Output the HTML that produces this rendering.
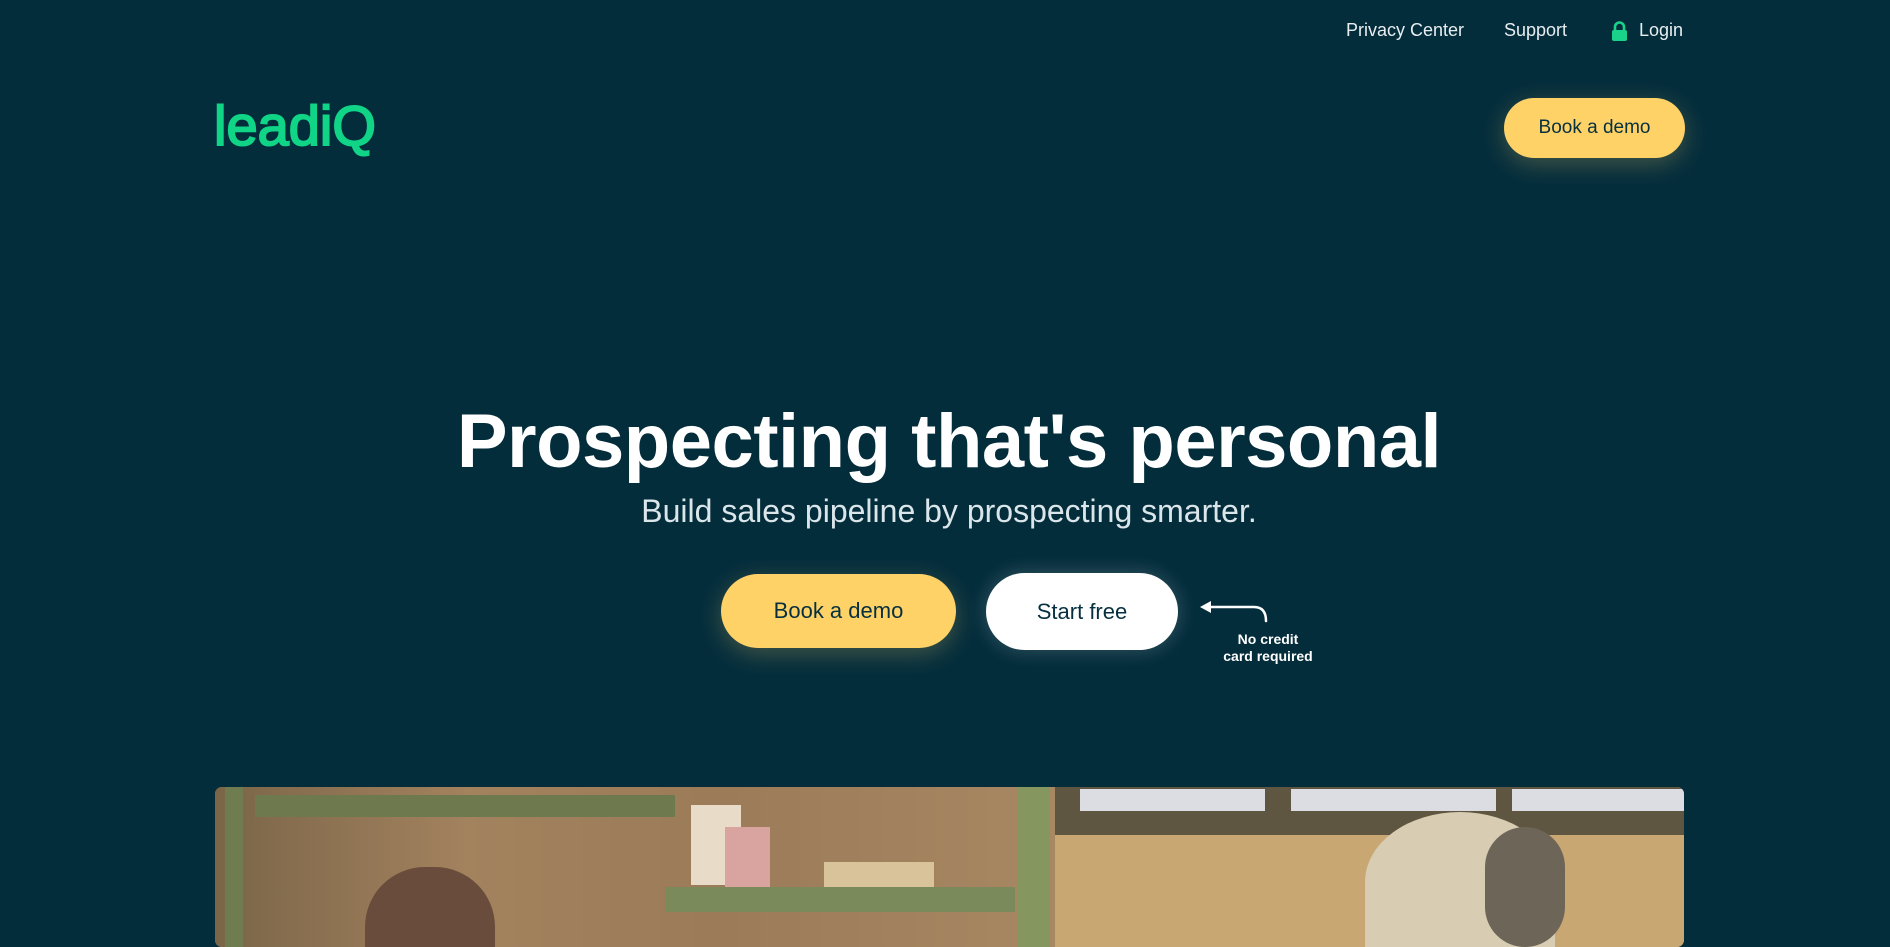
<!DOCTYPE html>
<html><head><meta charset="utf-8"><style>
*{margin:0;padding:0;box-sizing:border-box}
body{width:1890px;height:926px;overflow:hidden;background:#042d3c;font-family:"Liberation Sans",sans-serif;position:relative;color:#fff}
.a{position:absolute}
.nav{top:20px;font-size:18px;color:#e8eef0;white-space:nowrap}
.btn{position:absolute;border-radius:40px;display:flex;align-items:center;justify-content:center;color:#063040}
.y{background:#fed266;box-shadow:0 6px 24px rgba(254,210,102,.25)}
</style></head><body>
<div class="a nav" style="left:1346px">Privacy Center</div>
<div class="a nav" style="left:1504px">Support</div>
<svg class="a" style="left:1611px;top:21px" width="17" height="21" viewBox="0 0 17 21"><path d="M4 9V6a4.5 4.5 0 0 1 9 0v3" fill="none" stroke="#19d38a" stroke-width="2.6"/><rect x="1" y="9" width="15" height="11" rx="2" fill="#19d38a"/></svg>
<div class="a nav" style="left:1639px">Login</div>

<div class="a" style="left:214px;top:98px;font-size:56px;color:#10d486;-webkit-text-stroke:2px #10d486;letter-spacing:0px;line-height:56px">leadiQ</div>

<div class="btn y" style="left:1504px;top:98px;width:181px;height:60px;font-size:19px">Book a demo</div>

<div class="a" style="left:0;width:1898px;top:397px;text-align:center;font-size:76px;font-weight:bold;letter-spacing:-0.5px;line-height:90px">Prospecting that's personal</div>
<div class="a" style="left:0;width:1898px;top:492px;text-align:center;font-size:32px;color:#dbe6ea;line-height:38px">Build sales pipeline by prospecting smarter.</div>

<div class="btn y" style="left:721px;top:574px;width:235px;height:74px;font-size:22px">Book a demo</div>
<div class="btn" style="left:986px;top:573px;width:192px;height:77px;background:#fff;font-size:22px;box-shadow:0 0 20px rgba(255,255,255,.2)">Start free</div>

<svg class="a" style="left:1198px;top:598px" width="76" height="32" viewBox="0 0 76 32"><path d="M8 9H56q12 0 12 14" fill="none" stroke="#fff" stroke-width="2.5" stroke-linecap="round"/><path d="M2 9L13 3V15Z" fill="#fff"/></svg>
<div class="a" style="left:1208px;width:120px;top:631px;text-align:center;font-size:14px;font-weight:bold;line-height:17px">No credit<br>card required</div>

<div class="a" style="left:215px;top:787px;width:1469px;height:160px;border-radius:7px;overflow:hidden;background:#a58660">
 <div class="a" style="left:0;top:0;width:840px;height:160px;background:linear-gradient(90deg,#7a6548,#a3825e 30%,#9b7b58 60%,#a88863)"></div>
 <div class="a" style="left:40px;top:8px;width:420px;height:22px;background:#6e7a4e"></div>
 <div class="a" style="left:10px;top:0;width:18px;height:160px;background:#6f7c4f"></div>
 <div class="a" style="left:450px;top:100px;width:350px;height:25px;background:#7b8a5a"></div>
 <div class="a" style="left:476px;top:18px;width:50px;height:80px;background:#e8dcc8"></div>
 <div class="a" style="left:510px;top:40px;width:45px;height:60px;background:#d9a3a0"></div>
 <div class="a" style="left:609px;top:75px;width:110px;height:25px;background:#d9c39a"></div>
 <div class="a" style="left:150px;top:80px;width:130px;height:80px;border-radius:60px 60px 0 0;background:#6a4c3c"></div>
 <div class="a" style="left:802px;top:0;width:33px;height:160px;background:#86965f"></div>
 <div class="a" style="left:840px;top:0;width:629px;height:160px;background:#c9a772"></div>
 <div class="a" style="left:840px;top:0;width:629px;height:48px;background:#5e5640"></div>
 <div class="a" style="left:865px;top:2px;width:185px;height:22px;background:#dcdde3"></div>
 <div class="a" style="left:1076px;top:2px;width:205px;height:22px;background:#dcdde3"></div>
 <div class="a" style="left:1297px;top:2px;width:172px;height:22px;background:#dcdde3"></div>
 <div class="a" style="left:1150px;top:25px;width:190px;height:140px;border-radius:50% 50% 0 0;background:#d8cdb3"></div>
 <div class="a" style="left:1270px;top:40px;width:80px;height:120px;border-radius:40px;background:#6d6658"></div>
</div>
</body></html>
